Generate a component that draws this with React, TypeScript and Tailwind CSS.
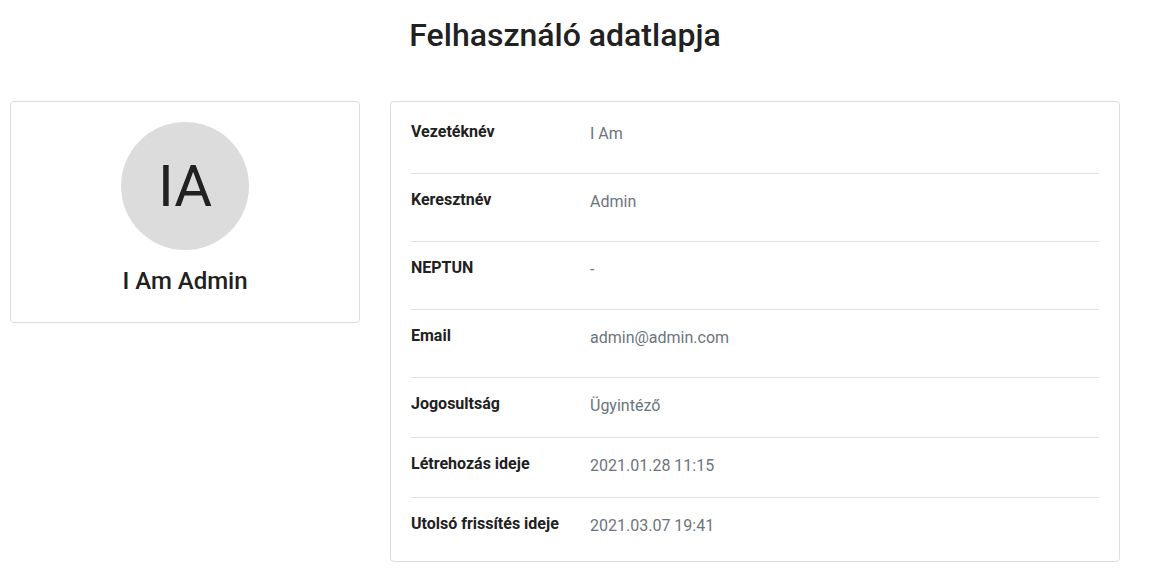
import React from "react";

const rows: { label: string; value: string; tall: boolean; last?: boolean }[] = [
  { label: "Vezetéknév", value: "I Am", tall: true },
  { label: "Keresztnév", value: "Admin", tall: true },
  { label: "NEPTUN", value: "-", tall: true },
  { label: "Email", value: "admin@admin.com", tall: true },
  { label: "Jogosultság", value: "Ügyintéző", tall: false },
  { label: "Létrehozás ideje", value: "2021.01.28 11:15", tall: false },
  { label: "Utolsó frissítés ideje", value: "2021.03.07 19:41", tall: false, last: true },
];

export default function App() {
  return (
    <div
      className="w-[1130px] bg-white text-[#212121]"
      style={{ fontFamily: "Roboto, 'Noto Sans', sans-serif" }}
    >
      <h1 className="pt-[13px] text-center text-[32px] font-medium leading-[44px] text-[#212121]">
        Felhasználó adatlapja
      </h1>
      <div className="mt-[44px] flex gap-[30px] px-[10px]">
        <div className="flex h-[222px] w-[350px] shrink-0 flex-col items-center rounded-[4px] border border-[#dcdcdc] pt-[20px]">
          <div className="flex h-[128px] w-[128px] items-center justify-center rounded-full bg-[#dcdcdc]">
            <span className="text-[58px] font-normal leading-none text-[#212121]">IA</span>
          </div>
          <div className="mt-[16px] text-[24px] font-medium leading-[30px] text-[#212121]">I Am Admin</div>
        </div>
        <div className="w-[730px] rounded-[4px] border border-[#dcdcdc] px-[20px] pt-[4px] pb-[8px]">
          {rows.map((r) => (
            <div
              key={r.label}
              className={
                (r.last ? "" : "border-b border-[#e0e0e0] ") +
                "flex pt-[16px] " +
                (r.last ? "pb-[19px]" : r.tall ? "pb-[31px]" : "pb-[23px]")
              }
            >
              <div className="w-[179px] shrink-0 text-[16px] font-bold leading-[20px] text-[#212121]">
                {r.label}
              </div>
              <div className="translate-y-[2px] text-[16px] leading-[20px] text-[#6c757d]">{r.value}</div>
            </div>
          ))}
        </div>
      </div>
    </div>
  );
}
